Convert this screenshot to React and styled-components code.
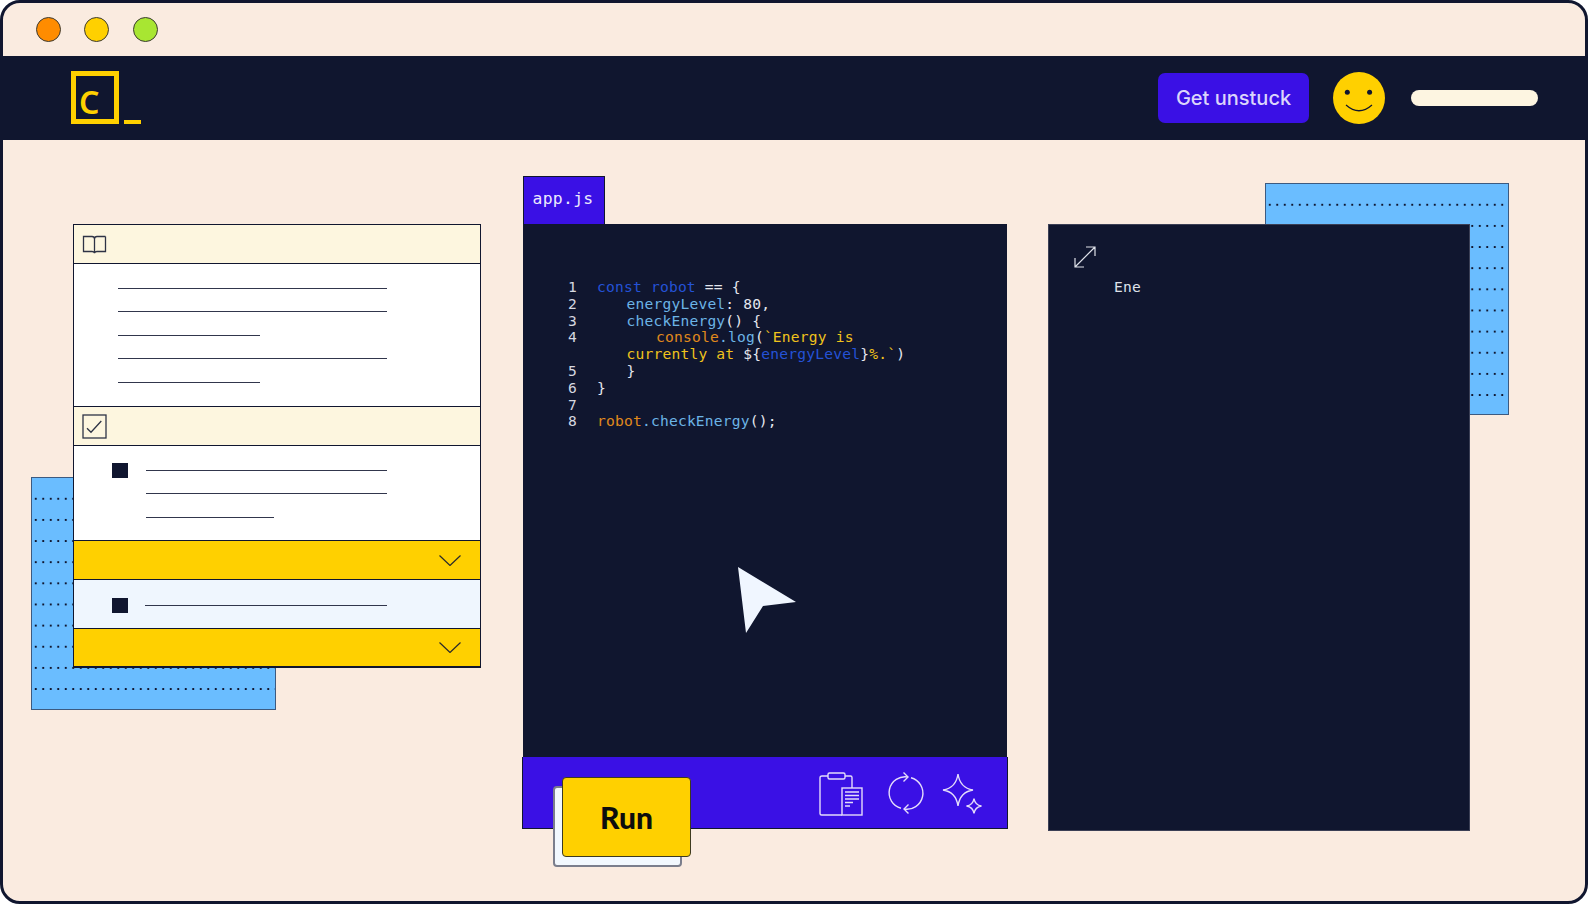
import React from "react";
import styled, { createGlobalStyle } from "styled-components";

const navy = "#10162f";
const hyper = "#3a10e5";
const yellow = "#ffd000";
const sky = "#6abdff";

const Global = createGlobalStyle`
    html, body { margin: 0; padding: 0; background: #fff; }
    #root { width: 1588px; height: 904px; }
`;

const Window = styled.div`
    box-sizing: border-box;
    width: 1588px;
    height: 904px;
    display: flex;
    flex-direction: column;
    overflow: hidden;
    border: 3px solid ${navy};
    border-radius: 20px;
    background: #faebe0;
    font-family: "Inter", sans-serif;
`;

const TitleBar = styled.div`
    height: 53px;
    flex: none;
    display: flex;
    align-items: center;
    padding-left: 33px;
    box-sizing: border-box;
    padding-bottom: 1px;
`;

const Dot = styled.span`
    box-sizing: border-box;
    width: 25px;
    height: 25px;
    border-radius: 50%;
    border: 1px solid #3b3a33;
    background: ${props => props.color};
    margin-right: ${props => props.gap}px;
`;

const Header = styled.header`
    height: 84px;
    flex: none;
    display: flex;
    align-items: center;
    background: ${navy};
    padding: 0 47px 0 68px;
    box-sizing: border-box;
`;

const Logo = styled.div`
    display: flex;
    align-items: flex-end;
    gap: 5px;
    margin-bottom: 2px;
`;

const LogoBox = styled.div`
    box-sizing: border-box;
    width: 48px;
    height: 53px;
    border: 5px solid ${yellow};
    display: flex;
    align-items: flex-end;
    padding-left: 3px;
    color: ${yellow};
    font-family: "Noto Sans", sans-serif;
    font-weight: 600;
    font-size: 32px;
    line-height: 34px;
`;

const LogoUnderscore = styled.span`
    width: 17px;
    height: 4px;
    background: ${yellow};
`;

const HelpButton = styled.div`
    margin-left: auto;
    width: 151px;
    height: 50px;
    border-radius: 7px;
    background: ${hyper};
    color: #dcd5fb;
    display: flex;
    align-items: center;
    justify-content: center;
    font-size: 20px;
    font-weight: 500;
`;

const Avatar = styled.svg`
    width: 52px;
    height: 52px;
    margin-left: 24px;
`;

const NamePill = styled.div`
    width: 127px;
    height: 16px;
    border-radius: 8px;
    background: #fdf5e1;
    margin-left: 26px;
    margin-bottom: 1px;
`;

const Main = styled.main`
    flex: 1;
    display: flex;
    align-items: flex-start;
    padding-left: 70px;
`;

const LessonColumn = styled.div`
    position: relative;
    width: 408px;
    margin-top: 84px;
    margin-right: 41px;
`;

const Dotted = styled.div`
    position: absolute;
    box-sizing: border-box;
    width: ${props => props.w}px;
    height: ${props => props.h}px;
    left: ${props => props.x}px;
    top: ${props => props.y}px;
    border: 1px solid #3c5a80;
    background-color: ${sky};
    background-image:
        linear-gradient(${sky}, ${sky}),
        radial-gradient(circle at center, ${navy} 1.1px, transparent 1.5px);
    background-size: 100% 4px, 7.5px 21.15px;
    background-position: 0 0, 0 10.2px;
    background-repeat: no-repeat, repeat;
`;

const LessonCard = styled.div`
    position: relative;
    box-sizing: border-box;
    border: 1px solid ${navy};
    background: #fff;
    display: flex;
    flex-direction: column;
`;

const SectionHead = styled.div`
    box-sizing: border-box;
    height: ${props => props.h}px;
    background: #fdf6df;
    border-bottom: 1px solid ${navy};
    border-top: ${props => props.divided ? `1px solid ${navy}` : "none"};
    display: flex;
    align-items: center;
    padding-left: 8px;
`;

const HeadIcon = styled.svg`
    width: 25px;
    height: 25px;
    fill: none;
    stroke: #2e3345;
    stroke-width: 1.3;
`;

const TextBlock = styled.div`
    box-sizing: border-box;
    height: ${props => props.h}px;
    padding: 24px 0 0 44px;
    display: flex;
    flex-direction: column;
    gap: 22.4px;
`;

const Rule = styled.div`
    height: 1px;
    width: ${props => props.w}px;
    background: #31364c;
`;

const TaskBlock = styled.div`
    box-sizing: border-box;
    height: ${props => props.h}px;
    background: ${props => props.tint ? "#eff6fe" : "#fff"};
    padding: ${props => props.top}px 0 0 38px;
    display: flex;
    align-items: flex-start;
`;

const Bullet = styled.span`
    width: 16px;
    height: 15px;
    background: ${navy};
    margin-top: -7px;
    flex: none;
`;

const TaskRules = styled.div`
    display: flex;
    flex-direction: column;
    gap: 22.4px;
    margin-left: ${props => props.indent}px;
`;

const Accordion = styled.div`
    box-sizing: border-box;
    height: ${props => props.h}px;
    background: ${yellow};
    border-top: 1px solid ${navy};
    border-bottom: 1px solid ${navy};
    display: flex;
    align-items: center;
    justify-content: flex-end;
    padding-right: 19px;
`;

const Chevron = styled.svg`
    width: 22px;
    height: 11px;
    fill: none;
    stroke: #2a2a2a;
    stroke-width: 1.2;
`;

const EditorColumn = styled.div`
    position: relative;
    width: 486px;
    margin-top: 36px;
    display: flex;
    flex-direction: column;
`;

const FileTab = styled.div`
    box-sizing: border-box;
    width: 82px;
    height: 48px;
    margin-left: 1px;
    border: 1px solid ${navy};
    border-bottom: none;
    background: ${hyper};
    color: #ece8fd;
    display: flex;
    align-items: center;
    justify-content: center;
    font-family: "DejaVu Sans Mono", monospace;
    font-size: 16.4px;
    letter-spacing: 0.3px;
    padding: 0 2px 4px 0;
`;

const CodePanel = styled.div`
    box-sizing: border-box;
    height: 533px;
    margin: 0 1px;
    background: ${navy};
    padding: 55px 0 0 45px;
    font-family: "DejaVu Sans Mono", monospace;
    font-size: 14.6px;
    line-height: 16.8px;
    letter-spacing: 0.2px;
    color: #e4e6ee;
`;

const CodeLine = styled.div`
    display: flex;
`;

const LineNo = styled.span`
    width: 29px;
    flex: none;
    color: #d6d8e0;
`;

const CodeText = styled.span`
    padding-left: ${props => props.indent * 29.5}px;
    white-space: pre;
`;

const Token = styled.span`
    color: ${props => props.color};
`;

const Pointer = styled.svg`
    position: absolute;
    left: 216px;
    top: 391px;
    width: 60px;
    height: 68px;
    fill: #f0f6ff;
`;

const ActionBar = styled.div`
    position: relative;
    box-sizing: border-box;
    height: 72px;
    background: ${hyper};
    border: 1px solid ${navy};
    border-top: none;
    display: flex;
    align-items: center;
    justify-content: flex-end;
    padding: 0 25px 0 0;
`;

const BarIcon = styled.svg`
    width: ${props => props.w}px;
    height: 44px;
    margin-left: ${props => props.gap}px;
    overflow: visible;
    fill: none;
    stroke: #e4dcfb;
    stroke-width: 1.4;
`;

const RunShadow = styled.div`
    position: absolute;
    box-sizing: border-box;
    left: 30px;
    top: 29px;
    width: 129px;
    height: 81px;
    border-radius: 4px;
    background: #f2f8fe;
    border: 2px solid #7b7e8c;
`;

const RunButton = styled.div`
    position: absolute;
    box-sizing: border-box;
    left: 39px;
    top: 20px;
    width: 129px;
    height: 80px;
    border-radius: 4px;
    background: ${yellow};
    border: 1px solid #3d3a20;
    display: flex;
    align-items: center;
    justify-content: center;
    color: #0d0d0d;
    font-family: "Lato", sans-serif;
    font-weight: 900;
    font-size: 30px;
`;

const PreviewColumn = styled.div`
    position: relative;
    width: 422px;
    height: 607px;
    margin-top: 84px;
    margin-left: 40px;
`;

const PreviewPanel = styled.div`
    position: relative;
    box-sizing: border-box;
    height: 100%;
    background: ${navy};
    border: 1px solid #3b3f55;
    padding: 20px 0 0 24px;
`;

const ExpandIcon = styled.svg`
    display: block;
    width: 24px;
    height: 24px;
    fill: none;
    stroke: #dfe2ea;
    stroke-width: 1.2;
`;

const Output = styled.div`
    margin: 9px 0 0 41px;
    font-family: "DejaVu Sans Mono", monospace;
    font-size: 14.6px;
    letter-spacing: 0.2px;
    line-height: 18px;
    color: #dfe2ea;
`;

const KEY = "#2452d6";
const PROP = "#6cb4e6";
const WARM = "#e08a1c";
const STR = "#f0c31c";

const code = [
    { n: 1, indent: 0, parts: [["const robot", KEY], [" == {"]] },
    { n: 2, indent: 1, parts: [["energyLevel", PROP], [": 80,"]] },
    { n: 3, indent: 1, parts: [["checkEnergy", PROP], ["() {"]] },
    { n: 4, indent: 2, parts: [["console", WARM], [".", PROP], ["log", PROP], ["("], ["`Energy is", STR]] },
    { n: "", indent: 1, parts: [["currently at ", STR], ["${"], ["energyLevel", KEY], ["}"], ["%.", STR], ["`", STR], [")"]] },
    { n: 5, indent: 1, parts: [["}"]] },
    { n: 6, indent: 0, parts: [["}"]] },
    { n: 7, indent: 0, parts: [[" "]] },
    { n: 8, indent: 0, parts: [["robot", WARM], [".", PROP], ["checkEnergy", PROP], ["();"]] },
];

const DownChevron = () => (
    <Chevron viewBox="0 0 22 11"><path d="M.5.5L11 10.500 21.500.5" /></Chevron>
);

const App = () => {
    return (
        <Window>
            <Global />
            <TitleBar>
                <Dot color="#ff8c00" gap={23} />
                <Dot color="#ffd000" gap={24} />
                <Dot color="#a8e632" gap={0} />
            </TitleBar>
            <Header>
                <Logo>
                    <LogoBox>C</LogoBox>
                    <LogoUnderscore />
                </Logo>
                <HelpButton>Get unstuck</HelpButton>
                <Avatar viewBox="0 0 52 52">
                    <circle cx="26" cy="26" r="26" fill={yellow} />
                    <circle cx="14.300" cy="20.300" r="2.500" fill={navy} />
                    <circle cx="36.600" cy="20.300" r="2.500" fill={navy} />
                    <path d="M13 33q13 11.500 26 0" fill="none" stroke={navy} strokeWidth="1.2" />
                </Avatar>
                <NamePill />
            </Header>
            <Main>
                <LessonColumn>
                    <Dotted x={-42} y={253} w={245} h={233} />
                    <LessonCard>
                        <SectionHead h={39}>
                            <HeadIcon viewBox="0 0 25 25">
                                <path d="M1.500 4.500h8.500q2.500 0 2.500 2.500v14q-.5-1.500-2.500-1.500H1.500zM23.500 4.500H15q-2.500 0-2.500 2.500M23.500 4.500v15H15q-2 0-2.500 1.500" />
                            </HeadIcon>
                        </SectionHead>
                        <TextBlock h={142}>
                            <Rule w={269} />
                            <Rule w={269} />
                            <Rule w={142} />
                            <Rule w={269} />
                            <Rule w={142} />
                        </TextBlock>
                        <SectionHead h={40} divided>
                            <HeadIcon viewBox="0 0 25 25">
                                <rect x="1" y="1" width="23" height="23" />
                                <path d="M5 14.300l4 4L19.300 7" />
                            </HeadIcon>
                        </SectionHead>
                        <TaskBlock h={94} top={24}>
                            <Bullet />
                            <TaskRules indent={18}>
                                <Rule w={241} />
                                <Rule w={241} />
                                <Rule w={128} />
                            </TaskRules>
                        </TaskBlock>
                        <Accordion h={40}><DownChevron /></Accordion>
                        <TaskBlock h={48} tint top={25}>
                            <Bullet />
                            <TaskRules indent={17}>
                                <Rule w={242} />
                            </TaskRules>
                        </TaskBlock>
                        <Accordion h={39}><DownChevron /></Accordion>
                    </LessonCard>
                </LessonColumn>
                <EditorColumn>
                    <FileTab>app.js</FileTab>
                    <CodePanel>
                        {code.map((line, i) => (
                            <CodeLine key={i}>
                                <LineNo>{line.n}</LineNo>
                                <CodeText indent={line.indent}>
                                    {line.parts.map(([text, color], j) => (
                                        <Token key={j} color={color}>{text}</Token>
                                    ))}
                                </CodeText>
                            </CodeLine>
                        ))}
                    </CodePanel>
                    <Pointer viewBox="0 0 60 68">
                        <path d="M0 0L58 35L25 39L8 66Z" />
                    </Pointer>
                    <ActionBar>
                        <RunShadow />
                        <RunButton>Run</RunButton>
                        <BarIcon w={44} gap={0} viewBox="0 0 44 44">
                            <rect x="10" y="2" width="17" height="6" rx="1.500" />
                            <path d="M10 5H4q-2 0-2 2v35.500q0 1.500 1.500 1.500H24M27 5h5.500q1.500 0 1.500 1.500V17" />
                            <rect x="24" y="17" width="20" height="27" />
                            <path d="M27 21h14M27 24.500h14M27 28h14M27 31.500h8M27 35h5" />
                        </BarIcon>
                        <BarIcon w={36} gap={26} viewBox="0 0 36 44">
                            <path d="M20 6A16 16 0 0 0 13 37.200M16 38A16 16 0 0 0 23 6.800" />
                            <path d="M15.500 1.500L20 6l-4.500 4.500M20.500 33.500L16 38l4.500 4.500" />
                        </BarIcon>
                        <BarIcon w={40} gap={18} viewBox="0 0 40 44">
                            <path d="M16 3q2 14 15 16q-13 2-15 16q-2-14-15-16q13-2 15-16z" />
                            <path d="M32 27.500q1 6.500 7.500 7.500q-6.500 1-7.500 7.500q-1-6.500-7.500-7.500q6.500-1 7.500-7.500z" />
                        </BarIcon>
                    </ActionBar>
                </EditorColumn>
                <PreviewColumn>
                    <Dotted x={217} y={-41} w={244} h={232} />
                    <PreviewPanel>
                        <ExpandIcon viewBox="0 0 24 24">
                            <path d="M2 22L22 2M13 2h9v9M2 13v9h9" />
                        </ExpandIcon>
                        <Output>Ene</Output>
                    </PreviewPanel>
                </PreviewColumn>
            </Main>
        </Window>
    );
};

export default App;
